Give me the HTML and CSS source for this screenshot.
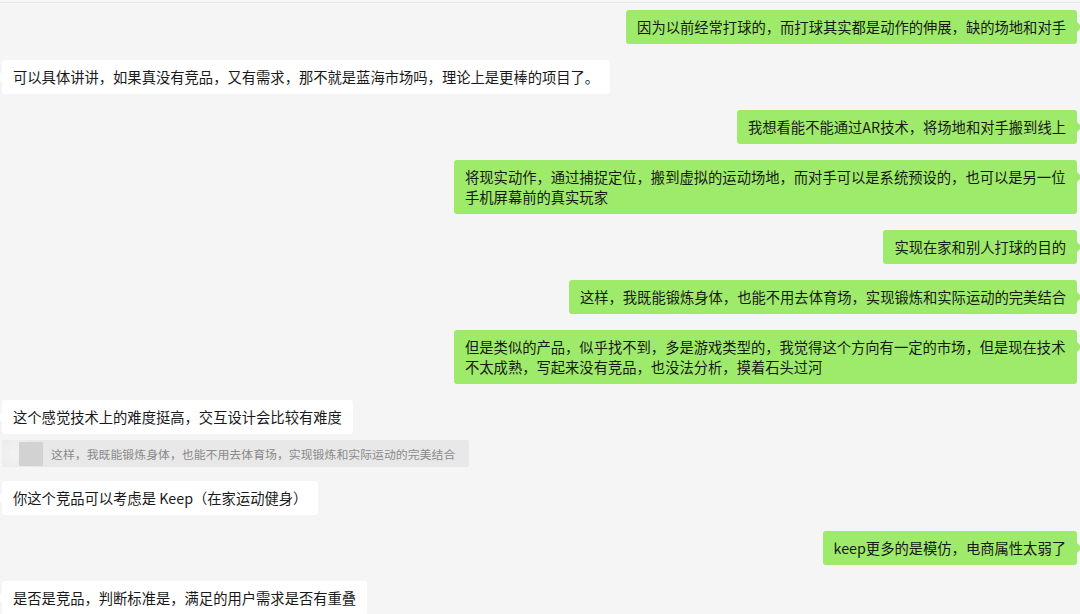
FILE: index.html
```html
<!DOCTYPE html>
<html lang="zh-CN">
<head>
    <meta charset="UTF-8">
    <meta name="viewport" content="width=device-width, initial-scale=1.0">
    <title>聊天记录</title>
    <link rel="stylesheet" href="styles.css">
</head>
<body>

    <div class="topLine"></div>

    <div id="chat">
        <div class="msg me"><div class="bubble">因为以前经常打球的，而打球其实都是动作的伸展，缺的场地和对手</div></div>
        <div class="msg other"><div class="bubble">可以具体讲讲，如果真没有竞品，又有需求，那不就是蓝海市场吗，理论上是更棒的项目了。</div></div>
        <div class="msg me"><div class="bubble">我想看能不能通过AR技术，将场地和对手搬到线上</div></div>
        <div class="msg me"><div class="bubble">将现实动作，通过捕捉定位，搬到虚拟的运动场地，而对手可以是系统预设的，也可以是另一位手机屏幕前的真实玩家</div></div>
        <div class="msg me"><div class="bubble">实现在家和别人打球的目的</div></div>
        <div class="msg me"><div class="bubble">这样，我既能锻炼身体，也能不用去体育场，实现锻炼和实际运动的完美结合</div></div>
        <div class="msg me"><div class="bubble">但是类似的产品，似乎找不到，多是游戏类型的，我觉得这个方向有一定的市场，但是现在技术不太成熟，写起来没有竞品，也没法分析，摸着石头过河</div></div>
        <div class="msg other"><div class="bubble">这个感觉技术上的难度挺高，交互设计会比较有难度</div></div>
        <div class="quote">
            <span class="quoteAvatar"></span>
            <span class="quoteText">这样，我既能锻炼身体，也能不用去体育场，实现锻炼和实际运动的完美结合</span>
        </div>
        <div class="msg other"><div class="bubble">你这个竞品可以考虑是 Keep（在家运动健身）</div></div>
        <div class="msg me"><div class="bubble">keep更多的是模仿，电商属性太弱了</div></div>
        <div class="msg other"><div class="bubble">是否是竞品，判断标准是，满足的用户需求是否有重叠</div></div>
    </div>

</body>
</html>
```

FILE: styles.css
```css
body {
    margin: 0;
    background-color: #f5f5f5;
    font-family: "Noto Sans CJK SC", "Noto Sans", sans-serif;
    color: #191919;
    overflow: hidden;
}

.topLine {
    height: 2px;
    border-bottom: 1px solid #e6e6e6;
}

#chat {
    display: flex;
    flex-direction: column;
    gap: 16px;
    padding: 7px 3px 0 2px;
}

.msg {
    display: flex;
}

.msg.me {
    justify-content: flex-end;
}

.msg.other {
    justify-content: flex-start;
}

.bubble {
    position: relative;
    max-width: 601px;
    padding: 7px 11px;
    font-size: 14.3px;
    line-height: 20px;
    border-radius: 3px;
}

.me .bubble {
    background-color: #9eea6a;
}

.other .bubble {
    background-color: #ffffff;
}

/* little arrows on the bubbles */
.bubble::after {
    content: "";
    position: absolute;
    top: 12px;
    border-top: 5px solid transparent;
    border-bottom: 5px solid transparent;
}

.me .bubble::after {
    right: -5px;
    border-left: 5px solid #9eea6a;
}

.other .bubble::after {
    left: -5px;
    border-right: 5px solid #ffffff;
}

/* quoted message */
.quote {
    align-self: flex-start;
    display: flex;
    align-items: center;
    gap: 8px;
    height: 27px;
    margin-top: -10px;
    margin-bottom: -2px;
    padding: 0 14px 0 17px;
    background: radial-gradient(circle at 12px 50%, #f3f3f3 0, #ededed 14px, #e8e8e8 22px);
    border-radius: 2px;
}

.quoteAvatar {
    width: 24px;
    height: 24px;
    background-color: #d2d2d2;
    border-radius: 1px;
}

.quoteText {
    font-size: 11.9px;
    color: #8a8a8a;
}
```
